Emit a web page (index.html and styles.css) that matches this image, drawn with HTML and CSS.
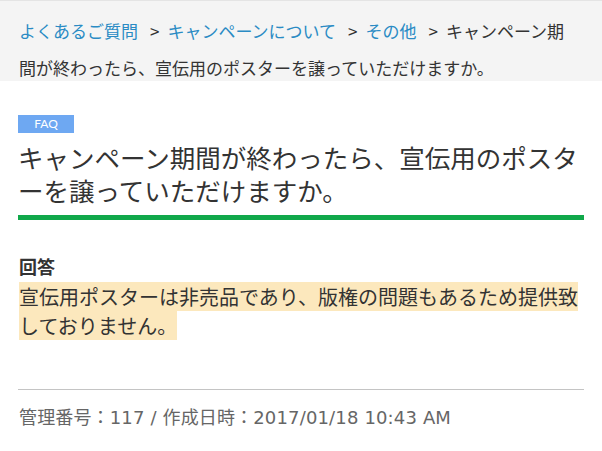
FILE: index.html
```html
<!DOCTYPE html>
<html lang="ja">
<head>
<meta charset="utf-8">
<title>FAQ</title>
<link rel="stylesheet" href="styles.css">
</head>
<body>
<nav class="breadcrumb">
  <p class="crumbs"><a class="crumb-link" href="#">よくあるご質問</a><span class="sep">&gt;</span><a class="crumb-link" href="#">キャンペーンについて</a><span class="sep">&gt;</span><a class="crumb-link" href="#">その他</a><span class="sep">&gt;</span><span class="crumb-current">キャンペーン期</span><span class="crumb-current">間が終わったら、宣伝用のポスターを譲っていただけますか。</span></p>
</nav>
<main class="content">
  <div class="badge-row"><span class="badge">FAQ</span></div>
  <h1 class="title">キャンペーン期間が終わったら、宣伝用のポスターを譲っていただけますか。</h1>
  <div class="green-bar"></div>
  <h2 class="answer-head">回答</h2>
  <p class="answer"><span class="marker">宣伝用ポスターは非売品であり、版権の問題もあるため提供致しておりません。</span></p>
  <hr class="divider">
  <p class="meta">管理番号：117 / 作成日時：2017/01/18 10:43 AM</p>
</main>
</body>
</html>
```

FILE: styles.css
```css
html, body {
  margin: 0;
  padding: 0;
  background: #ffffff;
}
body {
  font-family: "Noto Sans CJK JP", "Noto Sans", sans-serif;
  color: #333333;
}
.breadcrumb {
  box-sizing: border-box;
  height: 81px;
  background: #f4f4f4;
  border-top: 1px solid #e4e4e4;
  padding: 11px 28px 0 19px;
}
.crumbs {
  margin: 0;
  font-size: 17px;
  line-height: 37px;
  color: #333333;
}
.crumb-link {
  color: #2a8bc4;
  text-decoration: none;
}
.sep {
  color: #333333;
  margin: 0 8px 0 12px;
}
.crumb-current {
  color: #333333;
}
.content {
  padding: 0 18px;
}
.badge-row {
  margin-top: 34px;
  line-height: 18px;
  height: 18px;
}
.badge {
  display: inline-block;
  width: 56px;
  height: 18px;
  line-height: 18px;
  background: #6ea8f2;
  color: #ffffff;
  font-family: "Lato", "Noto Sans", sans-serif;
  font-size: 12px;
  text-align: center;
  vertical-align: top;
}
.title {
  margin: 7px 0 0;
  font-size: 25.5px;
  font-weight: normal;
  line-height: 33px;
  color: #333333;
}
.green-bar {
  margin-top: 9px;
  height: 5px;
  background: #10a84a;
}
.answer-head {
  margin: 33px 0 0;
  padding-left: 1px;
  font-size: 18px;
  font-weight: bold;
  line-height: 26px;
  color: #333333;
}
.answer {
  margin: 4px 0 0;
  padding-left: 1px;
  font-size: 20px;
  line-height: 28.5px;
  color: #333333;
}
.marker {
  background: #fce8bd;
}
.divider {
  margin: 49px 0 0;
  border: 0;
  border-top: 1px solid #c4c4c4;
  height: 0;
}
.meta {
  margin: 15px 0 0;
  padding-left: 1px;
  font-family: "DejaVu Sans", "Noto Sans CJK JP", sans-serif;
  font-size: 18px;
  letter-spacing: 0.15px;
  line-height: 26px;
  color: #666666;
}
```
